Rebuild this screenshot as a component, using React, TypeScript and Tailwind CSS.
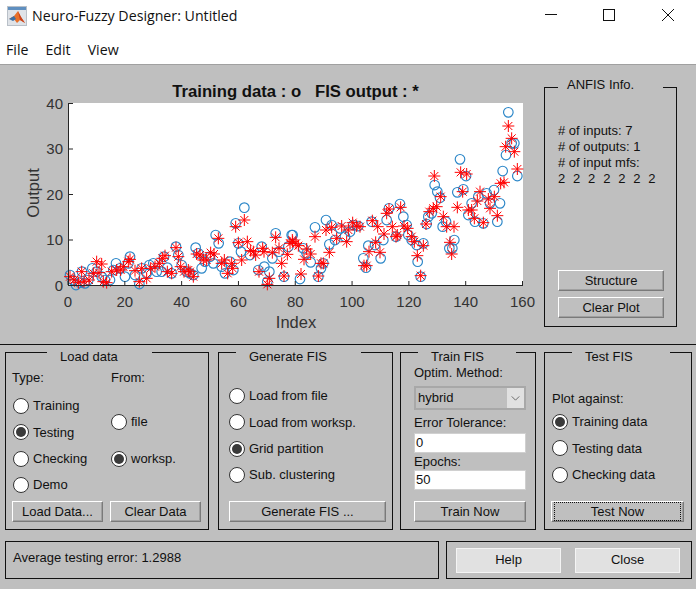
import React from "react";

const sans = "font-['Liberation_Sans',Arial,sans-serif]";

// marker positions are read off the plot as [x, y] pairs
const circlesLeft = [
  [30,525],[38,540],[48,555],[60,548],[66,515],[75,550],[85,540],[97,505],[110,515],[125,530],[135,540],[150,540],[160,510],[168,490],[180,505],[195,530],[205,490],[210,470],[225,525],[238,552],[245,505],[260,520],[268,495],[280,490],[290,515],[305,515],[312,470],[322,503],[335,520],[348,440],[355,465],[365,495],[380,515],[390,520],[400,525],[407,443],[415,460],[425,505],[435,485],[450,470],[460,490],[467,405],[476,430],[485,500],[495,520],[510,485],[520,510],[527,370],[535,430],[543,455],[553,323],[570,465],[595,510],[605,440],[613,500],[628,515],[622,545],[637,475],[647,400],[657,455],[672,530],[685,440],[698,405],
];
const starsLeft = [
  [30,530],[42,540],[55,548],[65,515],[72,545],[87,540],[100,520],[110,485],[125,492],[117,518],[130,545],[140,548],[155,515],[170,510],[182,510],[190,500],[205,485],[210,478],[225,512],[238,545],[245,505],[260,535],[272,505],[285,500],[298,490],[307,475],[315,467],[322,515],[335,520],[348,443],[355,470],[362,500],[372,515],[385,510],[390,515],[400,530],[410,462],[420,465],[430,480],[440,480],[452,458],[462,462],[475,415],[485,490],[493,480],[503,520],[515,490],[518,505],[527,380],[535,428],[545,480],[553,360],[562,425],[572,452],[580,455],[587,465],[597,515],[608,445],[612,455],[628,535],[622,553],[637,458],[647,412],[657,445],[665,490],[672,528],[682,463],[690,430],[697,420],
];
const circlesRight = [
  [5,405],[30,537],[40,445],[50,460],[62,487],[75,382],[85,530],[93,505],[100,490],[108,360],[118,433],[125,375],[135,420],[150,385],[165,410],[180,395],[190,375],[205,378],[220,475],[228,503],[235,437],[245,365],[255,435],[272,475],[280,420],[290,360],[297,325],[318,410],[330,312],[340,350],[350,375],[355,405],[365,420],[380,435],[383,485],[392,530],[400,430],[410,372],[415,350],[425,340],[434,255],[442,275],[450,293],[458,380],[468,365],[478,445],[487,445],[493,420],[502,277],[510,178],[520,268],[528,228],[535,345],[545,310],[555,365],[565,290],[580,370],[590,280],[600,310],[612,270],[622,365],[630,310],[638,213],[648,165],[655,37],[665,130],[673,130],[682,228],
];
const starsRight = [
  [8,425],[18,430],[25,437],[33,522],[42,478],[50,447],[62,462],[75,410],[85,528],[93,490],[100,490],[108,390],[118,457],[125,382],[140,415],[155,378],[170,425],[175,390],[188,368],[200,378],[210,380],[222,497],[230,497],[237,455],[247,362],[257,427],[263,380],[270,457],[282,402],[290,340],[297,327],[307,380],[318,410],[322,405],[332,322],[342,378],[353,385],[365,410],[373,425],[382,467],[392,527],[400,437],[408,372],[418,335],[430,325],[440,320],[433,228],[452,290],[460,350],[470,380],[480,427],[485,462],[492,380],[502,322],[512,217],[518,275],[530,222],[535,330],[545,330],[553,355],[562,303],[570,275],[580,368],[595,297],[600,325],[613,290],[622,347],[632,250],[642,247],[647,140],[655,78],[665,115],[673,155],[682,207],
];

const toLeft = (p: number[]) => [60 + p[0] / 3, 100 + p[1] / 3];
const toRight = (p: number[]) => [290 + p[0] / 3, 100 + p[1] / 3];
const circles = [...circlesLeft.map(toLeft), ...circlesRight.map(toRight)];
const stars = [...starsLeft.map(toLeft), ...starsRight.map(toRight)];

const Plot = () => {
  const xTicks = [0, 20, 40, 60, 80, 100, 120, 140, 160];
  const yTicks = [0, 10, 20, 30, 40];
  const xAt = (v: number) => 68 + (v / 160) * 454.5;
  const yAt = (v: number) => 285.5 - (v / 40) * 182;
  return (
    <svg viewBox="0 65 540 279" className="w-[540px] h-[279px] shrink-0">
      <rect x="68" y="103" width="455" height="182.5" fill="#fff" />
      {circles.map((p, i) => (
        <circle key={i} cx={p[0]} cy={p[1]} r="4.8" fill="none" stroke="#2a86c8" strokeWidth="1.15" />
      ))}
      {stars.map((p, i) => (
        <path
          key={i}
          d={`M${p[0] - 6} ${p[1]}H${p[0] + 6}M${p[0]} ${p[1] - 6}V${p[1] + 6}M${p[0] - 4} ${p[1] - 4}L${p[0] + 4} ${p[1] + 4}M${p[0] - 4} ${p[1] + 4}L${p[0] + 4} ${p[1] - 4}`}
          stroke="#ff0000"
          strokeWidth="1"
          fill="none"
        />
      ))}
      <path d="M68.5 103V285.5H523" stroke="#262626" strokeWidth="1" fill="none" />
      {xTicks.map((t) => (
        <g key={t}>
          <path d={`M${xAt(t)} 285V281`} stroke="#262626" />
          <text x={xAt(t)} y="307" textAnchor="middle" fontSize="15" fill="#333" fontFamily="Liberation Sans">
            {t}
          </text>
        </g>
      ))}
      {yTicks.map((t) => (
        <g key={t}>
          <path d={`M68 ${yAt(t)}H73`} stroke="#262626" />
          <text x="63" y={yAt(t) + 5} textAnchor="end" fontSize="15" fill="#333" fontFamily="Liberation Sans">
            {t}
          </text>
        </g>
      ))}
      <text x="295.5" y="97" textAnchor="middle" fontSize="16.7" fontWeight="700" fill="#111" fontFamily="Liberation Sans" xmlSpace="preserve">
        Training data : o   FIS output : *
      </text>
      <text x="296" y="328" textAnchor="middle" fontSize="16.5" fill="#333" fontFamily="Liberation Sans">
        Index
      </text>
      <text x="39" y="193" textAnchor="middle" fontSize="16.5" fill="#333" fontFamily="Liberation Sans" transform="rotate(-90 39 193)">
        Output
      </text>
    </svg>
  );
};

const AppIcon = () => (
  <svg viewBox="0 0 20 20" className="w-5 h-5 shrink-0">
    <rect x="0.5" y="0.5" width="19" height="19" fill="#dfe3e8" stroke="#b9c0c8" />
    <rect x="1" y="1" width="18" height="3" fill="#5f8fc0" />
    <path d="M2 13L7 10L11 5L14 11L18 17L13 14L10 17L7 13Z" fill="#e8702a" />
    <path d="M2 13L7 10L9 13L6 15Z" fill="#3b6fa5" />
    <path d="M11 5L14 11L18 17L13 14Z" fill="#c9411c" />
  </svg>
);

const Panel = (props: { title?: string; className: string; titleClass?: string; children: React.ReactNode }) => (
  <div className={`relative border border-[#111] ${props.className}`}>
    {props.title && (
      <span className={`absolute bg-[#bfbfbf] leading-4 ${props.titleClass}`}>{props.title}</span>
    )}
    {props.children}
  </div>
);

const Radio = (props: { label: string; checked?: boolean; className?: string }) => (
  <div className={`flex items-center gap-[4px] h-4 ${props.className ?? ""}`}>
    <span className="w-4 h-4 rounded-full bg-white border border-[#333] flex items-center justify-center shrink-0">
      {props.checked && <span className="w-[10px] h-[10px] rounded-full bg-[#3a3a3a]" />}
    </span>
    <span>{props.label}</span>
  </div>
);

const Button = (props: { label: string; className?: string; focused?: boolean }) => (
  <div
    className={`h-[21px] flex items-center justify-center bg-[#bfbfbf] border border-t-white border-l-white border-r-[#7a7a7a] border-b-[#7a7a7a] shadow-[inset_-1px_-1px_0_#a0a0a0] ${props.className ?? ""}`}
  >
    {props.focused ? (
      <span className="w-full h-full m-[2px] flex items-center justify-center border border-dotted border-[#111]">{props.label}</span>
    ) : (
      props.label
    )}
  </div>
);

const App = () => {
  return (
    <div className={`w-[696px] h-[589px] flex flex-col bg-white overflow-hidden text-[13px] text-[#111] ${sans}`}>
      <div className="h-[32px] flex items-center pl-[7px] gap-[5px] relative font-['Open_Sans',sans-serif] text-[14.2px] text-[#111]">
        <AppIcon />
        <span>Neuro-Fuzzy Designer: Untitled</span>
        <svg viewBox="0 0 140 16" className="absolute left-[545px] top-[7px] w-[140px] h-4" fill="none" stroke="#111">
          <path d="M0 7.5H12" />
          <rect x="58.5" y="2.5" width="11" height="11" />
          <path d="M117 2L129 14M129 2L117 14" />
        </svg>
      </div>
      <div className="h-[32px] flex items-center pl-[6px] pt-[3px] gap-[17px] font-['Open_Sans',sans-serif] text-[14.2px]">
        <span>File</span>
        <span>Edit</span>
        <span>View</span>
      </div>
      <div className="flex-1 flex flex-col bg-[#bfbfbf] border-t border-[#a0a0a0]">
        <div className="h-[280px] flex border-b border-[#111]">
          <Plot />
          <div className="pl-[4px] pt-[22px]">
            <Panel title="ANFIS Info." titleClass="left-[13px] w-[105px] pl-[9px] -top-[11px]" className="w-[133px] h-[240px] pl-[13px] pr-[12px] pt-[35px] flex flex-col">
              <div className="leading-4 whitespace-pre">
                <div># of inputs: 7</div>
                <div># of outputs: 1</div>
                <div># of input mfs:</div>
                <div className="[word-spacing:0.3px]">2  2  2  2  2  2  2</div>
              </div>
              <div className="mt-auto mb-[8px] flex flex-col gap-[6px]">
                <Button label="Structure" />
                <Button label="Clear Plot" />
              </div>
            </Panel>
          </div>
        </div>
        <div className="flex gap-[9px] pl-[5px] pt-[7px]">
          <Panel title="Load data" titleClass="left-[41px] w-[105px] pl-[13px] -top-[4px]" className="w-[204px] h-[178px] px-[6px] pt-[17px] flex flex-col">
            <div className="flex gap-[8px]">
              <div className="w-[91px] flex flex-col">
                <div className="leading-4 mb-[12px]">Type:</div>
                <div className="flex flex-col gap-[10.4px] pl-[1px]">
                  <Radio label="Training" />
                  <Radio label="Testing" checked />
                  <Radio label="Checking" />
                  <Radio label="Demo" />
                </div>
              </div>
              <div className="flex flex-col">
                <div className="leading-4 mb-[28px]">From:</div>
                <div className="flex flex-col gap-[21px]">
                  <Radio label="file" />
                  <Radio label="worksp." checked />
                </div>
              </div>
            </div>
            <div className="flex gap-[7px] mt-[8px]">
              <Button label="Load Data..." className="w-[91px]" />
              <Button label="Clear Data" className="w-[91px]" />
            </div>
          </Panel>
          <Panel title="Generate FIS" titleClass="left-[17px] w-[125px] pl-[13px] -top-[4px]" className="w-[175px] h-[178px] px-[10px] pt-[35px] flex flex-col">
            <div className="flex flex-col gap-[10.4px]">
              <Radio label="Load from file" />
              <Radio label="Load from worksp." />
              <Radio label="Grid partition" checked />
              <Radio label="Sub. clustering" />
            </div>
            <Button label="Generate FIS ..." className="w-[157px] mt-[18px]" />
          </Panel>
          <div className="ml-[-2px]">
            <Panel title="Train FIS" titleClass="left-[17px] w-[98px] pl-[13px] -top-[4px]" className="w-[136px] h-[178px] pl-[13px] pr-[9px] pt-[12px] flex flex-col">
              <div className="leading-4 mb-[5px]">Optim. Method:</div>
              <div className="h-[24px] flex items-center justify-between bg-[#bfbfbf] border-2 border-[#a8a8a8] pl-[2px] mb-[5px]">
                <span>hybrid</span>
                <span className="w-[17px] h-full bg-[#e1e1e1] flex items-center justify-center">
                  <svg viewBox="0 0 10 6" className="w-[9px] h-[5px]" fill="none" stroke="#555">
                    <path d="M0.5 0.5L5 5L9.5 0.5" />
                  </svg>
                </span>
              </div>
              <div className="leading-4 mb-[2px]">Error Tolerance:</div>
              <div className="h-[20px] bg-white border border-[#d0d0d0] pl-[1px] leading-[18px] mb-[1px]">0</div>
              <div className="leading-4">Epochs:</div>
              <div className="h-[20px] bg-white border border-[#d0d0d0] pl-[1px] leading-[18px]">50</div>
              <Button label="Train Now" className="mt-[11px]" />
            </Panel>
          </div>
          <div className="ml-[-1px]">
            <Panel title="Test FIS" titleClass="left-[27px] w-[98px] pl-[13px] -top-[4px]" className="w-[148px] h-[178px] px-[7px] pt-[38px] flex flex-col">
              <div className="leading-4 mb-[7px]">Plot against:</div>
              <div className="flex flex-col gap-[10.4px]">
                <Radio label="Training data" checked />
                <Radio label="Testing data" />
                <Radio label="Checking data" />
              </div>
              <Button label="Test Now" focused className="mt-[18px] -ml-[1px]" />
            </Panel>
          </div>
        </div>
        <div className="flex gap-[7px] pl-[5px] pt-[11px]">
          <div className="w-[434px] h-[38px] border border-[#111] pl-[7px] pt-[8px] leading-4">Average testing error: 1.2988</div>
          <div className="w-[246px] h-[38px] border border-[#111] flex items-center pl-[9px] gap-[14px]">
            <div className="w-[105px] h-[25px] bg-[#e1e1e1] border border-[#f4f4f4] flex items-center justify-center">Help</div>
            <div className="w-[105px] h-[25px] bg-[#e1e1e1] border border-[#f4f4f4] flex items-center justify-center">Close</div>
          </div>
        </div>
      </div>
    </div>
  );
};

export default App;
